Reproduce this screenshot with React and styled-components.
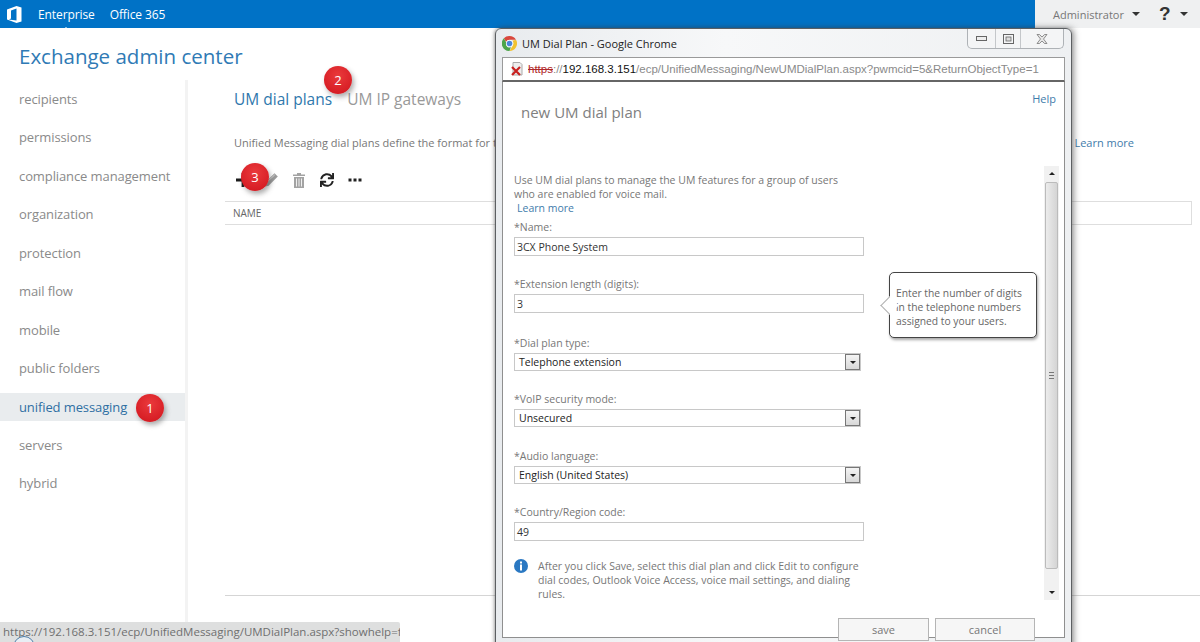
import React from 'react'
import styled, { createGlobalStyle } from 'styled-components'
import { FaSync } from 'react-icons/fa'

const GlobalStyle = createGlobalStyle`
  html, body { margin: 0; padding: 0; background: #fff; }
  body { font-family: "Open Sans", "Noto Sans", "Liberation Sans", sans-serif; }
`

const Page = styled.div`
  position: relative;
  width: 1200px;
  height: 642px;
  overflow: hidden;
  display: flex;
  flex-direction: column;
`

const TopBar = styled.div`
  display: flex;
  height: 28px;
  flex: none;
`

const BlueBar = styled.div`
  width: 1035px;
  background: #0072c6;
  display: flex;
  align-items: center;
  padding-left: 7px;
  box-sizing: border-box;
`

const Brand = styled.a`
  position: relative;
  color: #fff;
  font-size: 12px;
  margin-right: 15px;
  letter-spacing: -0.1px;
  &:first-of-type { margin-left: 16px; }
  ${p => p.$active && `
    &::after {
      content: "";
      position: absolute;
      left: 50%;
      bottom: -7px;
      margin-left: -3px;
      border: 3px solid transparent;
      border-top: 0;
      border-bottom-color: #fff;
    }
  `}
`

const UserBar = styled.div`
  flex: 1;
  background: #eff0f1;
  display: flex;
  align-items: center;
  padding-left: 18px;
  color: #777;
  font-size: 11px;
`

const Caret = styled.span`
  width: 0;
  height: 0;
  border-left: 4px solid transparent;
  border-right: 4px solid transparent;
  border-top: 4px solid #333;
  margin-left: ${p => p.$gap || 8}px;
`

const HelpMark = styled.span`
  font-family: "Liberation Sans", sans-serif;
  font-size: 19px;
  font-weight: 700;
  color: #333;
  margin-left: 19px;
`

const Title = styled.h1`
  margin: 0;
  height: 52px;
  flex: none;
  padding-left: 19px;
  font-size: 20.5px;
  line-height: 56px;
  font-weight: 400;
  color: #2f7ab5;
`

const Body = styled.div`
  display: flex;
  flex: 1;
  min-height: 0;
`

const Sidebar = styled.nav`
  width: 185px;
  border-right: 3px solid #f3f3f3;
  padding-top: 5px;
  display: flex;
  flex-direction: column;
  gap: 10.45px;
  flex: none;
`

const NavItem = styled.a`
  height: 28px;
  line-height: 28px;
  padding-left: 19px;
  font-size: 13px;
  letter-spacing: -0.1px;
  color: ${p => (p.$active ? '#2f6fa3' : '#8a8a8a')};
  background: ${p => (p.$active ? '#e9ecee' : 'transparent')};
`

const Main = styled.main`
  flex: 1;
  display: flex;
  flex-direction: column;
  padding: 5px 0 46px 37px;
  min-width: 0;
`

const Tabs = styled.div`
  display: flex;
  gap: 15px;
  height: 28px;
  align-items: center;
  margin-left: 9px;
`

const Tab = styled.a`
  font-size: 15.5px;
  color: ${p => (p.$active ? '#2f78ad' : '#999')};
`

const Description = styled.div`
  display: flex;
  justify-content: space-between;
  margin: 22px 66px 0 9px;
  height: 16px;
  line-height: 16px;
  font-size: 11px;
  color: #777;
`

const LearnMore = styled.a`
  color: #3f7cab;
  font-size: ${p => p.$size || 11}px;
  letter-spacing: 0;
`

const Toolbar = styled.div`
  display: flex;
  align-items: center;
  height: 24px;
  margin: 17px 0 9px 4px;
`

const ToolButton = styled.span`
  width: 28px;
  display: flex;
  justify-content: center;
  align-items: center;
  color: ${p => p.$color || '#222'};
`

const TableHead = styled.div`
  height: 22px;
  margin-right: 8px;
  border: 1px solid #dedede;
  border-left: 0;
  line-height: 22px;
  padding-left: 8px;
  font-size: 10px;
  color: #666;
`

const Spacer = styled.div`
  flex: 1;
`

const Rule = styled.div`
  height: 1px;
  background: #d5d5d5;
`

const Badge = styled.span`
  position: absolute;
  left: ${p => p.$x - 14}px;
  top: ${p => p.$y - 14}px;
  width: 28px;
  height: 28px;
  border-radius: 50%;
  background: radial-gradient(circle at 50% 35%, #ea3a3c, #d81f26 70%, #c5161d);
  box-shadow: 2px 3px 5px rgba(70, 70, 70, 0.45);
  color: #fff;
  font-size: 13px;
  line-height: 28px;
  text-align: center;
  z-index: ${p => p.$z || 1};
`

const StatusBubble = styled.div`
  position: absolute;
  left: 0;
  bottom: 0;
  width: 400px;
  height: 20px;
  line-height: 20px;
  box-sizing: border-box;
  padding-left: 3px;
  background: #dedfdf;
  color: #6f6f6f;
  font-size: 11.5px;
  white-space: nowrap;
  overflow: hidden;
  border-top-right-radius: 2px;
`

const Window = styled.section`
  position: absolute;
  left: 495px;
  top: 28px;
  width: 577px;
  height: 620px;
  box-sizing: border-box;
  border: 1px solid #5c5f62;
  border-radius: 6px 6px 0 0;
  background: linear-gradient(90deg, #e8ebee, #f7f8f9 40%, #eef0f2);
  box-shadow: 2px 0 6px rgba(60, 60, 60, 0.55), -1px 0 3px rgba(60, 60, 60, 0.3);
  padding: 0 6px;
  display: flex;
  flex-direction: column;
  z-index: 2;
`

const TitleBar = styled.div`
  height: 28px;
  flex: none;
  display: flex;
  align-items: flex-start;
  justify-content: space-between;
`

const WindowName = styled.div`
  display: flex;
  align-items: center;
  gap: 5px;
  height: 28px;
  font-size: 11px;
  color: #222;
`

const Controls = styled.div`
  display: flex;
  height: 19px;
  margin-right: 1px;
  border: 1px solid #aeb2b6;
  border-top: 0;
  border-radius: 0 0 5px 5px;
  background: #f4f5f6;
`

const Control = styled.span`
  width: ${p => p.$w}px;
  display: flex;
  align-items: center;
  justify-content: center;
  & + & { border-left: 1px solid #c4c7ca; }
`

const AddressBar = styled.div`
  height: 25px;
  flex: none;
  box-sizing: border-box;
  background: #fff;
  border: 1px solid #9a9a9a;
  border-bottom: 2px solid #666;
  display: flex;
  align-items: center;
  padding-left: 7px;
  font-family: "Liberation Sans", sans-serif;
  font-size: 11.5px;
  color: #8a8a8a;
  white-space: nowrap;
`

const Scheme = styled.span`
  color: #b0282a;
  text-decoration: line-through;
  margin-left: 3px;
`

const Host = styled.span`
  color: #111;
`

const Content = styled.div`
  height: 556px;
  flex: none;
  background: #fff;
  border: 1px solid #8f8f8f;
  border-top: 0;
  box-sizing: border-box;
  display: flex;
  flex-direction: column;
`

const DialogHead = styled.div`
  height: 75px;
  flex: none;
  display: flex;
  justify-content: space-between;
  align-items: flex-start;
  padding: 9px 8px 0 18px;
`

const DialogTitle = styled.h2`
  margin: 11px 0 0;
  font-size: 15px;
  line-height: 20px;
  font-weight: 400;
  color: #808080;
`

const ScrollArea = styled.div`
  height: 437px;
  flex: none;
  display: flex;
`

const Form = styled.div`
  flex: 1;
  overflow: hidden;
  padding: 7px 0 0 11px;
  position: relative;
`

const Intro = styled.p`
  margin: 0 0 4px;
  width: 340px;
  font-size: 10.5px;
  line-height: 14px;
  color: #777;
`

const IntroLink = styled.a`
  display: block;
  margin-left: 3px;
  color: #3f7cab;
`

const Field = styled.div`
  height: ${p => p.$h}px;
`

const Label = styled.label`
  display: block;
  height: 18px;
  line-height: 16px;
  font-size: 10.5px;
  color: #777;
`

const TextInput = styled.div`
  box-sizing: border-box;
  width: 350px;
  height: 19px;
  line-height: 18px;
  padding-left: 2px;
  border: 1px solid #c8c8c8;
  font-size: 10.5px;
  color: #333;
`

const SelectBox = styled.div`
  box-sizing: border-box;
  width: 347px;
  height: 18px;
  line-height: 17px;
  padding-left: 4px;
  border: 1px solid #c8c8c8;
  font-size: 10.5px;
  color: #222;
  display: flex;
  justify-content: space-between;
`

const SelectArrow = styled.span`
  width: 15px;
  margin: 0;
  background: linear-gradient(#f4f4f4, #d8d8d8);
  border: 1px solid #777;
  box-sizing: border-box;
  display: flex;
  align-items: center;
  justify-content: center;
  &::after {
    content: "";
    border-left: 3px solid transparent;
    border-right: 3px solid transparent;
    border-top: 3px solid #222;
  }
`

const Note = styled.div`
  display: flex;
  gap: 10px;
  margin-top: 3px;
  padding-left: 0;
`

const NoteText = styled.p`
  margin: 0;
  width: 330px;
  font-size: 10.5px;
  line-height: 14px;
  color: #777;
`

const Callout = styled.div`
  position: absolute;
  left: 386px;
  top: 106px;
  width: 148px;
  height: 66px;
  box-sizing: border-box;
  padding: 13px 5px 0 6px;
  background: #fff;
  border: 1px solid #444;
  border-radius: 5px;
  box-shadow: 1px 2px 3px rgba(0, 0, 0, 0.35);
  font-size: 10.3px;
  line-height: 14px;
  color: #666;
  &::before {
    content: "";
    position: absolute;
    left: -7px;
    top: 26px;
    width: 12px;
    height: 12px;
    background: #fff;
    border-left: 1px solid #b0b0b0;
    border-bottom: 1px solid #b0b0b0;
    transform: rotate(45deg);
  }
`

const Scrollbar = styled.div`
  width: 15px;
  margin: 0 5px 3px 0;
  background: #f1f1f1;
  display: flex;
  flex-direction: column;
  align-items: center;
  box-sizing: border-box;
  padding-top: 16px;
`

const ScrollArrow = styled.span`
  position: absolute;
  margin-top: ${p => p.$top}px;
  border-left: 3px solid transparent;
  border-right: 3px solid transparent;
  ${p => (p.$down ? 'border-top: 3px solid #222;' : 'border-bottom: 3px solid #222;')}
`

const Thumb = styled.div`
  width: 13px;
  height: 387px;
  box-sizing: border-box;
  border: 1px solid #bbb;
  border-radius: 2px;
  background: linear-gradient(90deg, #ececec, #d4d4d4);
  display: flex;
  align-items: center;
  justify-content: center;
`

const Grip = styled.span`
  width: 5px;
  height: 5px;
  border-top: 1px solid #777;
  border-bottom: 1px solid #777;
  position: relative;
  &::after {
    content: "";
    position: absolute;
    left: 0;
    right: 0;
    top: 2px;
    height: 1px;
    background: #777;
  }
`

const Footer = styled.div`
  display: flex;
  justify-content: flex-end;
  gap: 6px;
  padding: 15px 29px 0 0;
`

const ActionButton = styled.button`
  width: ${p => p.$w}px;
  height: 23px;
  padding: 0;
  background: #f6f6f6;
  border: 1px solid #b5b5b5;
  font-family: inherit;
  font-size: 11px;
  color: #777;
`

const BackdropArc = styled.span`
  position: absolute;
  left: 13px;
  top: 636px;
  width: 22px;
  height: 22px;
  box-sizing: border-box;
  border: 1px solid #4f7ea8;
  border-radius: 50%;
  background: #e8eef4;
  z-index: 1;
`

const OfficeLogo = () => (
  <svg width="15" height="17" viewBox="0 0 15 17">
    <path fill="#fff" d="M9.5 0 0 3.6v9.8L9.5 17l5-1.6V1.5L9.5 0Zm0 2.4v12.2L2 13.4l2-.9V4.6l5.5-2.2Z" />
  </svg>
)

const PlusIcon = () => (
  <svg width="16" height="16" viewBox="0 0 16 16">
    <path fill="#1c1c1c" d="M6.6 1h2.8v5.6H15v2.8H9.400v5.6H6.600V9.400H1V6.600h5.600Z" />
  </svg>
)

const PencilIcon = () => (
  <svg width="16" height="16" viewBox="0 0 16 16">
    <path fill="#9b9b9b" d="M11.500 1.200 14.800 4.500 5.600 13.700 1.200 14.800 2.300 10.400Z" />
    <path stroke="#e4e4e4" strokeWidth="0.8" d="M3.500 10.500 11.800 2.800" />
  </svg>
)

const TrashIcon = () => (
  <svg width="14" height="15" viewBox="0 0 14 15">
    <path fill="#a3a3a3" d="M5 0h4v1.500h4V3H1V1.500h4ZM2 4h10v11H2Z" />
    <path stroke="#efefef" strokeWidth="1" d="M4.500 5.500v8M7 5.500v8M9.500 5.500v8" />
  </svg>
)

const DotsIcon = () => (
  <svg width="14" height="4" viewBox="0 0 14 4">
    <rect x="0.500" y="0.500" width="3" height="3" fill="#222" />
    <rect x="5.500" y="0.500" width="3" height="3" fill="#222" />
    <rect x="10.500" y="0.500" width="3" height="3" fill="#222" />
  </svg>
)

const ChromeIcon = () => (
  <svg width="15" height="15" viewBox="0 0 16 16">
    <path fill="#d9473c" d="M8 0a8 8 0 0 1 6.930 4H8a4 4 0 0 0-3.700 2.500L2 2.500A8 8 0 0 1 8 0Z" />
    <path fill="#f2c230" d="M14.930 4A8 8 0 0 1 8 16l3.500-6A4 4 0 0 0 11 5l3.930-1Z" />
    <path fill="#4da54a" d="M2 2.500 5 8a3 3 0 0 0 4.500 3.700L8 16A8 8 0 0 1 2 2.500Z" />
    <circle cx="8" cy="8" r="3.800" fill="#fff" />
    <circle cx="8" cy="8" r="3" fill="#4a86d8" />
  </svg>
)

const InsecureIcon = () => (
  <svg width="15" height="16" viewBox="0 0 15 16">
    <path fill="#eee" stroke="#aaa" d="M3 1.500h7l2 2V14H3Z" />
    <path stroke="#c8201f" strokeWidth="2.200" d="M2 6l8 8M10 6l-8 8" />
  </svg>
)

const InfoIcon = () => (
  <svg width="14" height="14" viewBox="0 0 14 14" style={{ flex: 'none', marginTop: 0 }}>
    <circle cx="7" cy="7" r="7" fill="#2a78c2" />
    <rect x="6" y="2.500" width="2" height="2" fill="#fff" />
    <rect x="6" y="5.500" width="2" height="6" fill="#fff" />
  </svg>
)

const MinGlyph = () => (
  <svg width="11" height="7" viewBox="0 0 11 7">
    <rect x="0.500" y="1.500" width="10" height="4" fill="#eee" stroke="#666" />
  </svg>
)

const MaxGlyph = () => (
  <svg width="11" height="10" viewBox="0 0 11 10">
    <rect x="0.500" y="0.500" width="10" height="9" fill="none" stroke="#666" />
    <rect x="3" y="3" width="5" height="4" fill="#ddd" stroke="#666" strokeWidth="0.800" />
  </svg>
)

const CloseGlyph = () => (
  <svg width="12" height="10" viewBox="0 0 12 10">
    <path fill="#e6e6e6" stroke="#777" strokeWidth="0.800" d="M1 0.500h2.500L6 3l2.500-2.500H11L7.500 5 11 9.500H8.500L6 7 3.500 9.500H1L4.500 5Z" />
  </svg>
)

const navItems = [
  'recipients',
  'permissions',
  'compliance management',
  'organization',
  'protection',
  'mail flow',
  'mobile',
  'public folders',
  'unified messaging',
  'servers',
  'hybrid',
]

const App = () => {
  return (
    <Page>
      <GlobalStyle />
      <TopBar>
        <BlueBar>
          <OfficeLogo />
          <Brand $active>Enterprise</Brand>
          <Brand>Office 365</Brand>
        </BlueBar>
        <UserBar>
          Administrator
          <Caret />
          <HelpMark>?</HelpMark>
          <Caret $gap={9} />
        </UserBar>
      </TopBar>
      <Title>Exchange admin center</Title>
      <Body>
        <Sidebar>
          {navItems.map(item => (
            <NavItem key={item} $active={item === 'unified messaging'}>{item}</NavItem>
          ))}
        </Sidebar>
        <Main>
          <Tabs>
            <Tab $active>UM dial plans</Tab>
            <Tab>UM IP gateways</Tab>
          </Tabs>
          <Description>
            <span>Unified Messaging dial plans define the format for telephone extensions</span>
            <LearnMore>Learn more</LearnMore>
          </Description>
          <Toolbar>
            <ToolButton><PlusIcon /></ToolButton>
            <ToolButton><PencilIcon /></ToolButton>
            <ToolButton><TrashIcon /></ToolButton>
            <ToolButton><FaSync size={14} /></ToolButton>
            <ToolButton><DotsIcon /></ToolButton>
          </Toolbar>
          <TableHead>NAME</TableHead>
          <Spacer />
          <Rule />
        </Main>
      </Body>

      <Badge $x={150} $y={408}>1</Badge>
      <Badge $x={338} $y={80}>2</Badge>
      <Badge $x={255} $y={177}>3</Badge>

      <BackdropArc />
      <StatusBubble>https://192.168.3.151/ecp/UnifiedMessaging/UMDialPlan.aspx?showhelp=false#</StatusBubble>

      <Window>
        <TitleBar>
          <WindowName>
            <ChromeIcon />
            UM Dial Plan - Google Chrome
          </WindowName>
          <Controls>
            <Control $w={27}><MinGlyph /></Control>
            <Control $w={24}><MaxGlyph /></Control>
            <Control $w={42}><CloseGlyph /></Control>
          </Controls>
        </TitleBar>
        <AddressBar>
          <InsecureIcon />
          <Scheme>https</Scheme>://<Host>192.168.3.151</Host>/ecp/UnifiedMessaging/NewUMDialPlan.aspx?pwmcid=5&amp;ReturnObjectType=1
        </AddressBar>
        <Content>
          <DialogHead>
            <DialogTitle>new UM dial plan</DialogTitle>
            <LearnMore>Help</LearnMore>
          </DialogHead>
          <ScrollArea>
            <Form>
              <Intro>
                Use UM dial plans to manage the UM features for a group of users
                who are enabled for voice mail.
                <IntroLink>Learn more</IntroLink>
              </Intro>
              <Field $h={57}>
                <Label>*Name:</Label>
                <TextInput>3CX Phone System</TextInput>
              </Field>
              <Field $h={59}>
                <Label>*Extension length (digits):</Label>
                <TextInput>3</TextInput>
              </Field>
              <Field $h={56}>
                <Label>*Dial plan type:</Label>
                <SelectBox>Telephone extension<SelectArrow /></SelectBox>
              </Field>
              <Field $h={57}>
                <Label>*VoIP security mode:</Label>
                <SelectBox>Unsecured<SelectArrow /></SelectBox>
              </Field>
              <Field $h={56}>
                <Label>*Audio language:</Label>
                <SelectBox>English (United States)<SelectArrow /></SelectBox>
              </Field>
              <Field $h={52}>
                <Label>*Country/Region code:</Label>
                <TextInput>49</TextInput>
              </Field>
              <Note>
                <InfoIcon />
                <NoteText>
                  After you click Save, select this dial plan and click Edit to
                  configure dial codes, Outlook Voice Access, voice mail settings,
                  and dialing rules.
                </NoteText>
              </Note>
              <Callout>Enter the number of digits in the telephone numbers assigned to your users.</Callout>
            </Form>
            <Scrollbar>
              <ScrollArrow $top={-10} />
              <Thumb><Grip /></Thumb>
              <ScrollArrow $down $top={409} />
            </Scrollbar>
          </ScrollArea>
          <Footer>
            <ActionButton $w={91}>save</ActionButton>
            <ActionButton $w={100}>cancel</ActionButton>
          </Footer>
        </Content>
      </Window>
    </Page>
  )
}

export default App
